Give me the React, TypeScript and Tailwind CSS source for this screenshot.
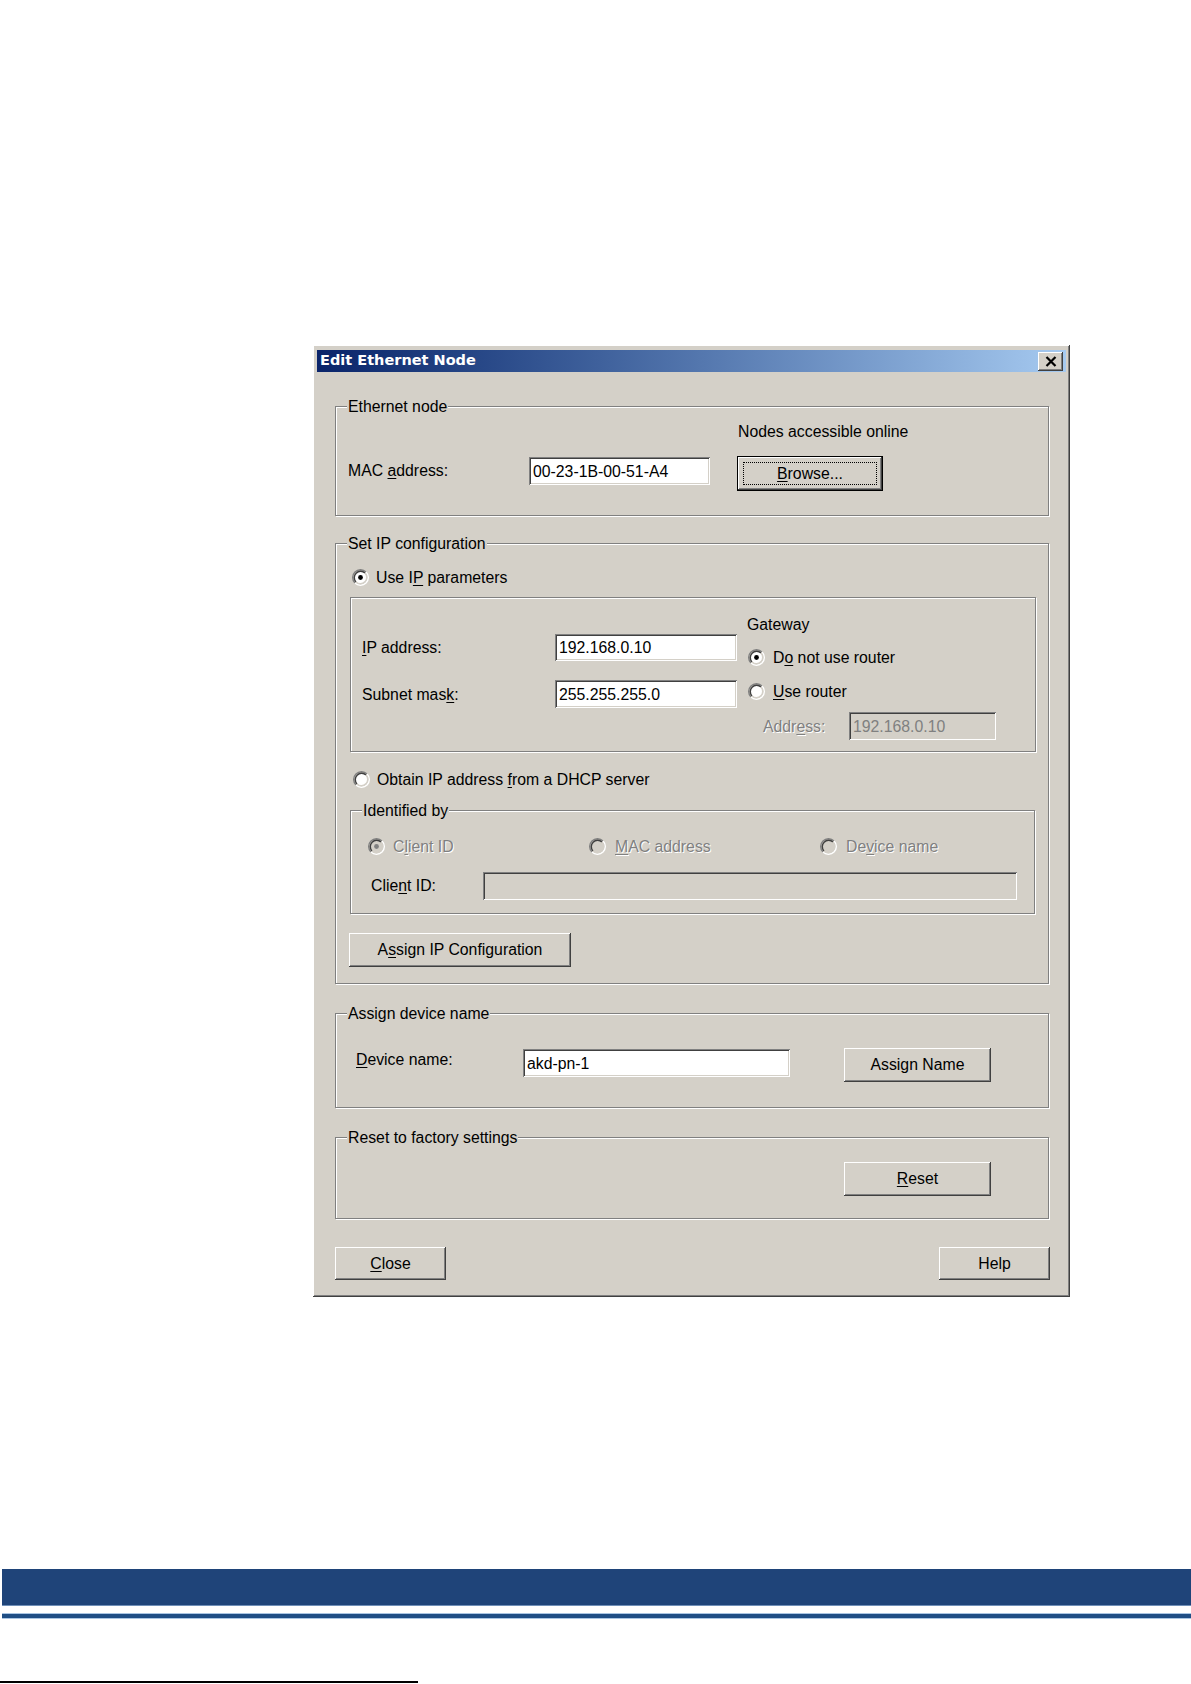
import React from 'react';

const raised =
  'bg-[#d4d0c8] shadow-[inset_-1px_-1px_#404040,inset_1px_1px_#ffffff,inset_-2px_-2px_#808080,inset_2px_2px_#d4d0c8]';
const sunken =
  'shadow-[inset_1px_1px_#808080,inset_-1px_-1px_#ffffff,inset_2px_2px_#404040,inset_-2px_-2px_#d4d0c8]';
const off = 'text-[#808080] [text-shadow:1px_1px_0_#ffffff]';

const Key: React.FC<{ children: React.ReactNode }> = ({ children }) => (
  <span className="underline decoration-1 underline-offset-[2px]">{children}</span>
);

const Radio: React.FC<{ checked?: boolean; disabled?: boolean }> = ({ checked, disabled }) => (
  <svg width="17" height="17" viewBox="0 0 12 12" className="shrink-0">
    <circle cx="6" cy="6" r="4.2" fill={disabled ? '#d4d0c8' : '#ffffff'} />
    <path d="M2.11 9.89A5.5 5.5 0 0 1 9.89 2.11" fill="none" stroke="#808080" />
    <path d="M2.82 9.18A4.5 4.5 0 0 1 9.18 2.82" fill="none" stroke="#404040" />
    <path d="M9.89 2.11A5.5 5.5 0 0 1 2.11 9.89" fill="none" stroke="#ffffff" />
    <path d="M9.18 2.82A4.5 4.5 0 0 1 2.82 9.18" fill="none" stroke="#d4d0c8" />
    {checked && <circle cx="6" cy="6" r="1.7" fill={disabled ? '#808080' : '#000000'} />}
  </svg>
);

const Group: React.FC<{ label?: string; className?: string; children: React.ReactNode }> = ({
  label,
  className,
  children,
}) => (
  <div className={`relative border border-[#808080] shadow-[inset_1px_1px_0_#ffffff,1px_1px_0_#ffffff] ${className ?? ''}`}>
    {label && (
      <span className="absolute left-[11px] top-[-1px] -translate-y-1/2 bg-[#d4d0c8] px-[1px] leading-[19px] whitespace-nowrap">
        {label}
      </span>
    )}
    {children}
  </div>
);

const Field: React.FC<{ value?: string; disabled?: boolean; className?: string }> = ({ value, disabled, className }) => (
  <div
    className={`flex items-center pl-[4px] leading-[19px] whitespace-nowrap ${sunken} ${
      disabled ? 'bg-[#d4d0c8] text-[#808080]' : 'bg-white'
    } ${className ?? ''}`}
  >
    {value}
  </div>
);

const App: React.FC = () => {
  return (
    <div className="w-[1191px] h-[1684px] overflow-hidden bg-white flex flex-col text-[15.8px] text-black font-['Liberation_Sans',Arial,sans-serif]">
      <div className={`ml-[313px] mt-[345px] w-[757px] h-[952px] flex flex-col pt-[5px] px-[4px] ${raised}`}>
        <div className="h-[22px] flex items-center justify-between pl-[3px] pr-[3px] bg-gradient-to-r from-[#0a246a] to-[#a6caf0]">
          <span className="text-white font-bold text-[14.5px] font-['DejaVu_Sans',sans-serif]">Edit Ethernet Node</span>
          <div className={`w-[25px] h-[19px] flex items-center justify-center ${raised}`}>
            <svg width="12" height="11" viewBox="0 0 12 11">
              <path d="M1.5 1 L10.5 10 M10.5 1 L1.5 10" stroke="#000" strokeWidth="2.2" />
            </svg>
          </div>
        </div>

        <div className="ml-[18px] w-[715px] flex flex-col">
          <Group label="Ethernet node" className="mt-[34px] w-[714px] h-[110px] pl-[12px] pt-[15px]">
            <div className="ml-[390px] leading-[19px]">Nodes accessible online</div>
            <div className="mt-[15px] flex items-start">
              <div className="w-[181px] mt-[5px] leading-[19px]">
                MAC <Key>a</Key>ddress:
              </div>
              <Field value="00-23-1B-00-51-A4" className="mt-[1px] w-[181px] h-[28px]" />
              <div className="ml-[27px] w-[146px] h-[35px] border border-black">
                <div className={`relative w-full h-full flex items-center justify-center ${raised}`}>
                  <div className="absolute inset-x-[5px] top-[5px] bottom-[5px] border border-dotted border-black" />
                  <span className="leading-[19px]">
                    <Key>B</Key>rowse...
                  </span>
                </div>
              </div>
            </div>
          </Group>

          <Group label="Set IP configuration" className="mt-[27px] w-[714px] h-[441px] pt-[24px] flex flex-col">
            <div className="ml-[16px] flex items-center h-[19px]">
              <Radio checked />
              <span className="ml-[7px]">
                Use I<Key>P</Key> parameters
              </span>
            </div>

            <Group className="mt-[10px] ml-[14px] w-[686px] h-[155px] flex">
              <div className="pl-[11px] pt-[36px] flex flex-col">
                <div className="flex items-start">
                  <div className="w-[193px] mt-[4px] leading-[19px]">
                    <Key>I</Key>P address:
                  </div>
                  <Field value="192.168.0.10" className="w-[182px] h-[27px]" />
                </div>
                <div className="mt-[19px] flex items-start">
                  <div className="w-[193px] mt-[5px] leading-[19px]">
                    Subnet mas<Key>k</Key>:
                  </div>
                  <Field value="255.255.255.0" className="w-[182px] h-[28px]" />
                </div>
              </div>
              <div className="ml-[10px] pt-[17px] flex flex-col">
                <div className="leading-[19px]">Gateway</div>
                <div className="mt-[14px] ml-[1px] flex items-center h-[19px]">
                  <Radio checked />
                  <span className="ml-[8px]">
                    D<Key>o</Key> not use router
                  </span>
                </div>
                <div className="mt-[15px] ml-[1px] flex items-center h-[19px]">
                  <Radio />
                  <span className="ml-[8px]">
                    <Key>U</Key>se router
                  </span>
                </div>
                <div className="mt-[11px] pl-[16px] flex items-start">
                  <div className={`w-[86px] mt-[5px] leading-[19px] ${off}`}>
                    Addr<Key>e</Key>ss:
                  </div>
                  <Field value="192.168.0.10" disabled className="w-[147px] h-[28px]" />
                </div>
              </div>
            </Group>

            <div className="mt-[18px] ml-[17px] flex items-center h-[19px]">
              <Radio />
              <span className="ml-[7px]">
                Obtain IP address <Key>f</Key>rom a DHCP server
              </span>
            </div>

            <Group label="Identified by" className="mt-[21px] ml-[14px] w-[685px] h-[104px] pt-[26px] flex flex-col">
              <div className={`ml-[17px] flex items-center h-[19px] ${off}`}>
                <div className="w-[221px] flex items-center">
                  <Radio checked disabled />
                  <span className="ml-[8px]">
                    C<Key>l</Key>ient ID
                  </span>
                </div>
                <div className="w-[231px] flex items-center">
                  <Radio disabled />
                  <span className="ml-[9px]">
                    <Key>M</Key>AC address
                  </span>
                </div>
                <div className="flex items-center">
                  <Radio disabled />
                  <span className="ml-[9px]">
                    De<Key>v</Key>ice name
                  </span>
                </div>
              </div>
              <div className="mt-[16px] pl-[20px] flex items-start">
                <div className="w-[112px] mt-[4px] leading-[19px]">
                  Clie<Key>n</Key>t ID:
                </div>
                <Field disabled className="w-[534px] h-[28px]" />
              </div>
            </Group>

            <div className={`mt-[19px] ml-[13px] w-[222px] h-[34px] flex items-center justify-center ${raised}`}>
              A<Key>s</Key>sign IP Configuration
            </div>
          </Group>

          <Group label="Assign device name" className="mt-[29px] w-[714px] h-[95px] pt-[34px] pl-[20px] flex items-start">
            <div className="w-[167px] mt-[2px] leading-[19px]">
              <Key>D</Key>evice name:
            </div>
            <Field value="akd-pn-1" className="mt-[1px] w-[267px] h-[28px]" />
            <div className={`ml-[54px] w-[147px] h-[34px] flex items-center justify-center ${raised}`}>Assign Name</div>
          </Group>

          <Group label="Reset to factory settings" className="mt-[29px] w-[714px] h-[82px] pt-[24px]">
            <div className={`ml-[508px] w-[147px] h-[34px] flex items-center justify-center ${raised}`}>
              <Key>R</Key>eset
            </div>
          </Group>

          <div className="mt-[28px] flex justify-between">
            <div className={`w-[111px] h-[33px] flex items-center justify-center ${raised}`}>
              <Key>C</Key>lose
            </div>
            <div className={`w-[111px] h-[33px] flex items-center justify-center ${raised}`}>Help</div>
          </div>
        </div>
      </div>

      <div className="mt-[272px] ml-[2px] h-[36px] bg-[#1f4479] shadow-[0_1px_0_#6f8fb8]" />
      <div className="mt-[9px] ml-[2px] h-[4px] bg-[#1f4e85] shadow-[0_-1px_0_#a9c5e3,0_1px_0_#a9c5e3]" />
      <div className="mt-[63px] h-[2px] w-[418px] bg-black" />
    </div>
  );
};

export default App;
